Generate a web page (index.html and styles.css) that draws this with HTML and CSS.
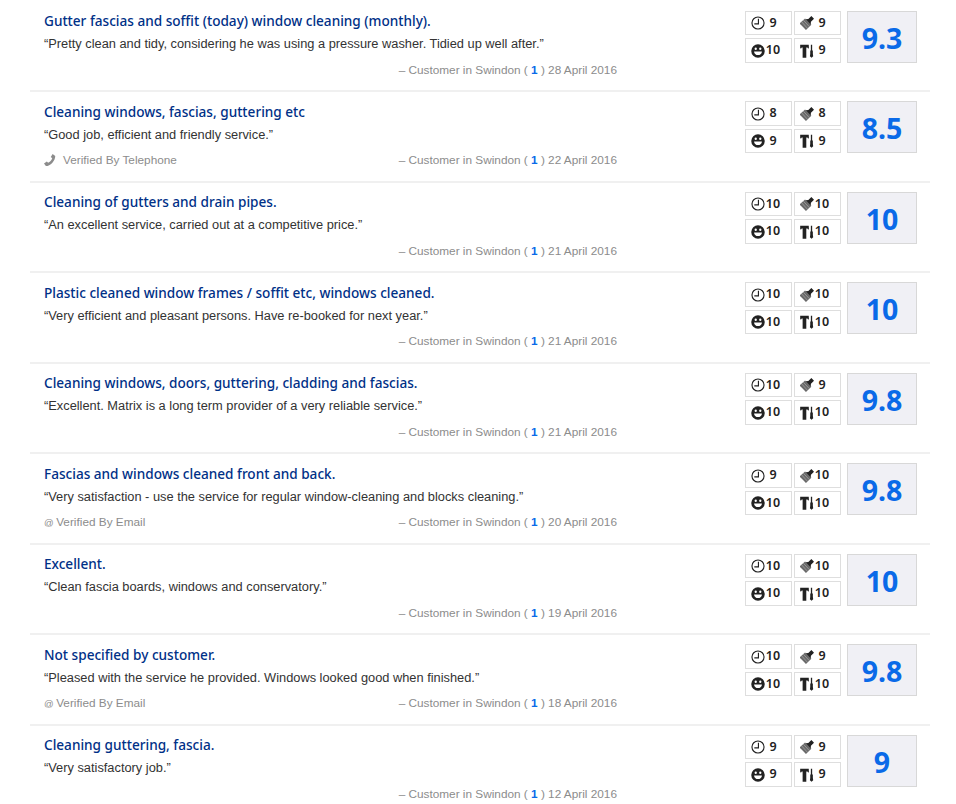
FILE: index.html
```html
<!DOCTYPE html>
<html lang="en">
<head>
<meta charset="utf-8">
<title>Reviews</title>
<link rel="stylesheet" href="styles.css">
</head>
<body>
<svg class="defs" width="0" height="0" aria-hidden="true">
  <symbol id="i-clock" viewBox="0 0 16 16"><circle cx="8" cy="8" r="6.9" fill="none" stroke="currentColor" stroke-width="1.3"/><path d="M8.500 3.200V9H3.800" fill="none" stroke="currentColor" stroke-width="1.300"/></symbol>
  <symbol id="i-brush" viewBox="0 0 16 16"><path d="M-.5 8.500 5.800 2.800 13 10 6.800 16Z" fill="currentColor" opacity=".68"/><path d="M1.800 6.600 8.500 14M3.800 4.800 10.500 12M.8 10.400l4 4" stroke="#fff" stroke-width=".5" opacity=".7"/><path d="M6.500 3.800 9.500 3.500 13 0 16 3l-3.500 3.600-.3 3.200Z" fill="currentColor"/></symbol>
  <symbol id="i-smile" viewBox="0 0 16 16"><circle cx="8" cy="8" r="7.700" fill="currentColor"/><ellipse cx="5.400" cy="5.400" rx="1.300" ry="1.500" fill="#fff"/><ellipse cx="10.600" cy="5.400" rx="1.300" ry="1.500" fill="#fff"/><path d="M3.500 8.500h9c0 2.400-2 4.200-4.500 4.200s-4.500-1.800-4.500-4.200Z" fill="#fff"/></symbol>
  <symbol id="i-tools" viewBox="0 0 16 16"><path d="M.2 .8h9.800l.2 4-1 .2-.7-1H7.200V15.800H3V4H2l-.8 1-1-.2Z" fill="currentColor"/><path d="M12.400 .8h1.500V7.500h.8v4l.4 2.500-1.900 1.800-1.900-1.800.4-2.500v-4h.7Z" fill="currentColor"/></symbol>
  <symbol id="i-phone" viewBox="0 0 16 16"><path d="M11.500 0 15 2.500C15 9 8.500 16 2.500 16L0 12.500 3.800 10 5.500 11.500C8 10.500 10 8 11 5.500L9 4Z" fill="currentColor"/></symbol>
</svg>
<main class="reviews">

<article class="review">
  <div class="body">
    <h3 class="title">Gutter fascias and soffit (today) window cleaning (monthly).</h3>
    <p class="quote">“Pretty clean and tidy, considering he was using a pressure washer. Tidied up well after.”</p>
    <div class="meta"><span class="verified"></span><span class="author">– Customer in Swindon ( <b>1</b> ) 28 April 2016</span></div>
  </div>
  <div class="scores">
    <div class="cell"><svg class="ico"><use href="#i-clock"/></svg><span>9</span></div>
    <div class="cell"><svg class="ico"><use href="#i-brush"/></svg><span>9</span></div>
    <div class="cell"><svg class="ico"><use href="#i-smile"/></svg><span>10</span></div>
    <div class="cell"><svg class="ico"><use href="#i-tools"/></svg><span>9</span></div>
  </div>
  <div class="total">9.3</div>
</article>

<article class="review">
  <div class="body">
    <h3 class="title">Cleaning windows, fascias, guttering etc</h3>
    <p class="quote">“Good job, efficient and friendly service.”</p>
    <div class="meta"><span class="verified"><svg class="ico-phone"><use href="#i-phone"/></svg>Verified By Telephone</span><span class="author">– Customer in Swindon ( <b>1</b> ) 22 April 2016</span></div>
  </div>
  <div class="scores">
    <div class="cell"><svg class="ico"><use href="#i-clock"/></svg><span>8</span></div>
    <div class="cell"><svg class="ico"><use href="#i-brush"/></svg><span>8</span></div>
    <div class="cell"><svg class="ico"><use href="#i-smile"/></svg><span>9</span></div>
    <div class="cell"><svg class="ico"><use href="#i-tools"/></svg><span>9</span></div>
  </div>
  <div class="total">8.5</div>
</article>

<article class="review">
  <div class="body">
    <h3 class="title">Cleaning of gutters and drain pipes.</h3>
    <p class="quote">“An excellent service, carried out at a competitive price.”</p>
    <div class="meta"><span class="verified"></span><span class="author">– Customer in Swindon ( <b>1</b> ) 21 April 2016</span></div>
  </div>
  <div class="scores">
    <div class="cell"><svg class="ico"><use href="#i-clock"/></svg><span>10</span></div>
    <div class="cell"><svg class="ico"><use href="#i-brush"/></svg><span>10</span></div>
    <div class="cell"><svg class="ico"><use href="#i-smile"/></svg><span>10</span></div>
    <div class="cell"><svg class="ico"><use href="#i-tools"/></svg><span>10</span></div>
  </div>
  <div class="total">10</div>
</article>

<article class="review">
  <div class="body">
    <h3 class="title">Plastic cleaned window frames / soffit etc, windows cleaned.</h3>
    <p class="quote">“Very efficient and pleasant persons. Have re-booked for next year.”</p>
    <div class="meta"><span class="verified"></span><span class="author">– Customer in Swindon ( <b>1</b> ) 21 April 2016</span></div>
  </div>
  <div class="scores">
    <div class="cell"><svg class="ico"><use href="#i-clock"/></svg><span>10</span></div>
    <div class="cell"><svg class="ico"><use href="#i-brush"/></svg><span>10</span></div>
    <div class="cell"><svg class="ico"><use href="#i-smile"/></svg><span>10</span></div>
    <div class="cell"><svg class="ico"><use href="#i-tools"/></svg><span>10</span></div>
  </div>
  <div class="total">10</div>
</article>

<article class="review">
  <div class="body">
    <h3 class="title">Cleaning windows, doors, guttering, cladding and fascias.</h3>
    <p class="quote">“Excellent. Matrix is a long term provider of a very reliable service.”</p>
    <div class="meta"><span class="verified"></span><span class="author">– Customer in Swindon ( <b>1</b> ) 21 April 2016</span></div>
  </div>
  <div class="scores">
    <div class="cell"><svg class="ico"><use href="#i-clock"/></svg><span>10</span></div>
    <div class="cell"><svg class="ico"><use href="#i-brush"/></svg><span>9</span></div>
    <div class="cell"><svg class="ico"><use href="#i-smile"/></svg><span>10</span></div>
    <div class="cell"><svg class="ico"><use href="#i-tools"/></svg><span>10</span></div>
  </div>
  <div class="total">9.8</div>
</article>

<article class="review">
  <div class="body">
    <h3 class="title">Fascias and windows cleaned front and back.</h3>
    <p class="quote">“Very satisfaction - use the service for regular window-cleaning and blocks cleaning.”</p>
    <div class="meta"><span class="verified"><span class="at">@</span>Verified By Email</span><span class="author">– Customer in Swindon ( <b>1</b> ) 20 April 2016</span></div>
  </div>
  <div class="scores">
    <div class="cell"><svg class="ico"><use href="#i-clock"/></svg><span>9</span></div>
    <div class="cell"><svg class="ico"><use href="#i-brush"/></svg><span>10</span></div>
    <div class="cell"><svg class="ico"><use href="#i-smile"/></svg><span>10</span></div>
    <div class="cell"><svg class="ico"><use href="#i-tools"/></svg><span>10</span></div>
  </div>
  <div class="total">9.8</div>
</article>

<article class="review">
  <div class="body">
    <h3 class="title">Excellent.</h3>
    <p class="quote">“Clean fascia boards, windows and conservatory.”</p>
    <div class="meta"><span class="verified"></span><span class="author">– Customer in Swindon ( <b>1</b> ) 19 April 2016</span></div>
  </div>
  <div class="scores">
    <div class="cell"><svg class="ico"><use href="#i-clock"/></svg><span>10</span></div>
    <div class="cell"><svg class="ico"><use href="#i-brush"/></svg><span>10</span></div>
    <div class="cell"><svg class="ico"><use href="#i-smile"/></svg><span>10</span></div>
    <div class="cell"><svg class="ico"><use href="#i-tools"/></svg><span>10</span></div>
  </div>
  <div class="total">10</div>
</article>

<article class="review">
  <div class="body">
    <h3 class="title">Not specified by customer.</h3>
    <p class="quote">“Pleased with the service he provided. Windows looked good when finished.”</p>
    <div class="meta"><span class="verified"><span class="at">@</span>Verified By Email</span><span class="author">– Customer in Swindon ( <b>1</b> ) 18 April 2016</span></div>
  </div>
  <div class="scores">
    <div class="cell"><svg class="ico"><use href="#i-clock"/></svg><span>10</span></div>
    <div class="cell"><svg class="ico"><use href="#i-brush"/></svg><span>9</span></div>
    <div class="cell"><svg class="ico"><use href="#i-smile"/></svg><span>10</span></div>
    <div class="cell"><svg class="ico"><use href="#i-tools"/></svg><span>10</span></div>
  </div>
  <div class="total">9.8</div>
</article>

<article class="review">
  <div class="body">
    <h3 class="title">Cleaning guttering, fascia.</h3>
    <p class="quote">“Very satisfactory job.”</p>
    <div class="meta"><span class="verified"></span><span class="author">– Customer in Swindon ( <b>1</b> ) 12 April 2016</span></div>
  </div>
  <div class="scores">
    <div class="cell"><svg class="ico"><use href="#i-clock"/></svg><span>9</span></div>
    <div class="cell"><svg class="ico"><use href="#i-brush"/></svg><span>9</span></div>
    <div class="cell"><svg class="ico"><use href="#i-smile"/></svg><span>9</span></div>
    <div class="cell"><svg class="ico"><use href="#i-tools"/></svg><span>9</span></div>
  </div>
  <div class="total">9</div>
</article>

</main>
</body>
</html>
```
FILE: styles.css
```css
* { box-sizing: border-box; }
html, body { margin: 0; background: #fff; overflow: hidden; height: 804px; }
.defs { position: absolute; }
.reviews { margin: 0 26px 0 30px; padding-top: 1.5px; }
.review {
  display: flex;
  align-items: flex-start;
  height: 90.5px;
  padding: 9.4px 13px 0 14px;
  border-bottom: 2px solid #f0f0f0;
}
.body { width: 573px; margin: 0.3px 128px 0 0; }
.title {
  margin: 0;
  font: 500 13.6px/20px "Noto Sans", sans-serif;
  color: #003087;
}
.quote {
  margin: 4px 0 0;
  font: 12.82px/18px "Liberation Sans", sans-serif;
  color: #333;
}
.meta {
  display: flex;
  justify-content: space-between;
  margin-top: 7.7px;
  font: 11.8px/18px "Liberation Sans", sans-serif;
  color: #8c8c8c;
}
.meta b { color: #0a6ae8; }
.at { font-size: 9.5px; margin-right: 2.5px; }
.ico-phone { width: 12px; height: 12px; margin-right: 7px; vertical-align: -2px; }
.scores {
  display: grid;
  grid-template-columns: 47px 47px;
  grid-auto-rows: 24.5px;
  column-gap: 2px;
  row-gap: 3px;
  width: 96px;
}
.cell {
  display: flex;
  align-items: center;
  padding-left: 5px;
  border: 1.5px solid #dedede;
  font: 600 12.5px/1 "Noto Sans", sans-serif;
  color: #222;
}
.cell .ico { width: 14px; height: 14px; flex: none; }
.cell span { width: 16px; text-align: center; }
.total {
  width: 70px;
  height: 52px;
  margin-left: 6px;
  background: #f0f0f5;
  border: 1px solid #d8d8d8;
  text-align: center;
  font: 700 28.5px/52.5px "Noto Sans", sans-serif;
  color: #0a6ae8;
}
```
